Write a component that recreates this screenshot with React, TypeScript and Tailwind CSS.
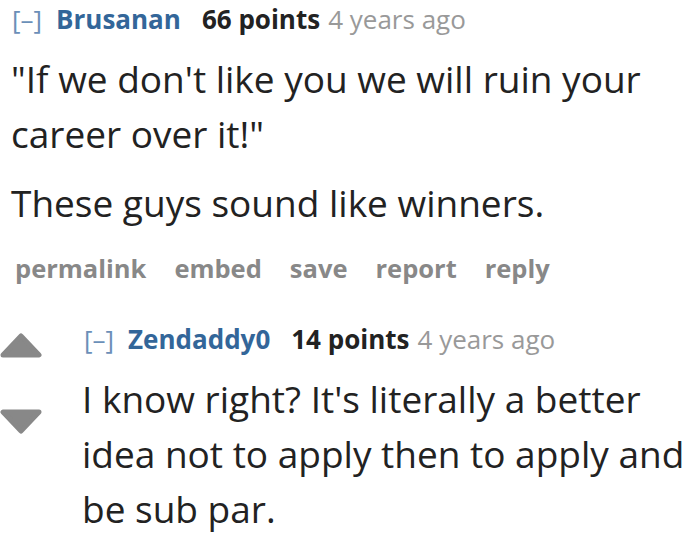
import React from 'react';

const font = { fontFamily: '"Open Sans", "Noto Sans", sans-serif' };

const Tagline: React.FC<{ author: string; points: string; time: string }> = ({ author, points, time }) => (
  <div className="flex items-baseline text-[26px] leading-[34px] whitespace-nowrap">
    <span className="text-[#6b8fb8] mr-[14px]">[–]</span>
    <span className="font-bold text-[#369] mr-[21px]">{author}</span>
    <span className="font-bold text-[#222]">{points}</span>
    <span className="text-[#999] ml-[8px]">{time}</span>
  </div>
);

const Arrow: React.FC<{ down?: boolean }> = ({ down }) => (
  <svg width="42" height="25" viewBox="0 0 42 25" className={down ? 'rotate-180' : ''}>
    <polygon points="3,22 21,3 39,22" fill="#888" stroke="#888" strokeWidth="5" strokeLinejoin="round" />
  </svg>
);

const actions = ['permalink', 'embed', 'save', 'report', 'reply'];

export default function App() {
  return (
    <div className="bg-white w-[700px] h-[541px] overflow-hidden text-[#222]" style={font}>
      <div className="pl-[12px] pt-[2px]">
        <Tagline author="Brusanan" points="66 points" time="4 years ago" />
        <div className="mt-[15px] text-[37px] leading-[55px] -ml-[1px]">
          <p>"If we don't like you we will ruin your career over it!"</p>
          <p className="mt-[14px]">These guys sound like winners.</p>
        </div>
        <ul className="mt-[20px] ml-[3px] flex gap-[28px] text-[25.5px] leading-[36px] font-bold text-[#888]">
          {actions.map((a) => (
            <li key={a}>{a}</li>
          ))}
        </ul>
      </div>

      <div className="mt-[36px] flex">
        <div className="w-[42px] shrink-0 flex flex-col pt-[11px] gap-[51px]">
          <Arrow />
          <Arrow down />
        </div>
        <div className="ml-[42px] flex-1">
          <Tagline author="Zendaddy0" points="14 points" time="4 years ago" />
          <p className="mt-[15px] -ml-[2px] text-[37px] leading-[55px]">
            I know right? It's literally a better idea not to apply then to apply and be sub par.
          </p>
        </div>
      </div>
    </div>
  );
}
